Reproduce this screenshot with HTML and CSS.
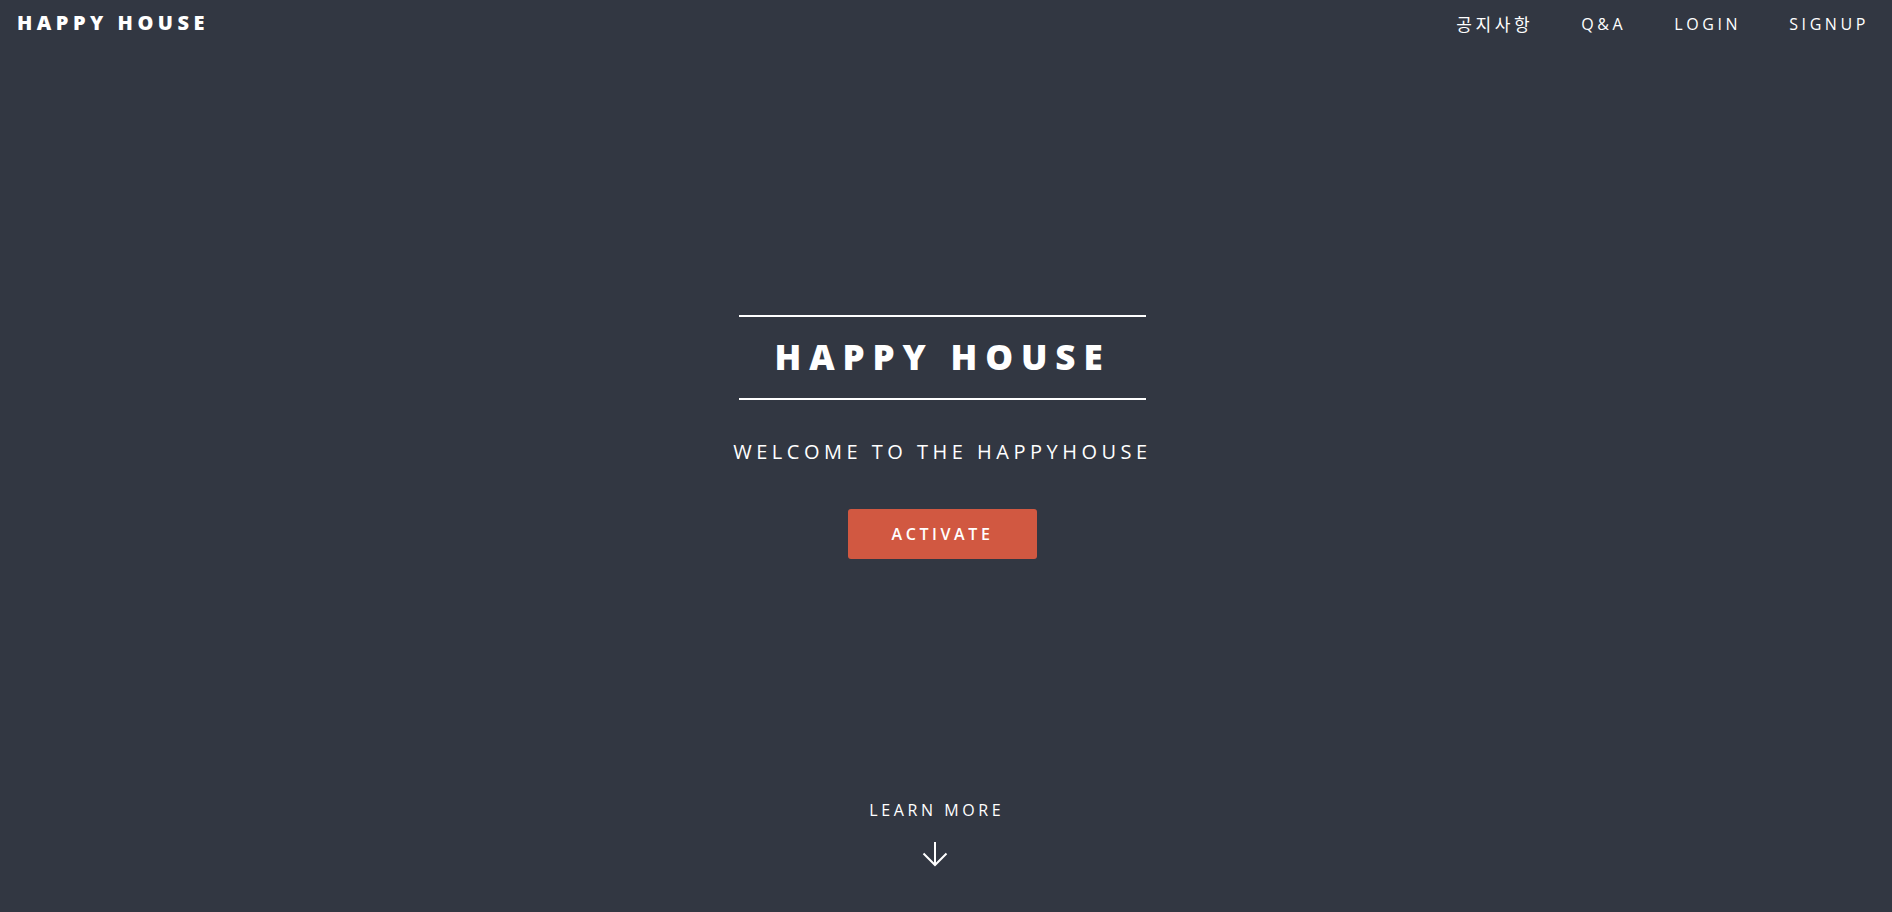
FILE: index.html
```html
<!DOCTYPE html>
<html lang="ko">
<head>
<meta charset="utf-8">
<title>Happy House</title>
<link rel="stylesheet" href="styles.css">
</head>
<body>
<div class="page">
  <header class="header">
    <a class="logo" href="#">Happy House</a>
    <nav class="nav">
      <a class="nav-link nav-ko" href="#">공지사항</a>
      <a class="nav-link" href="#">Q&amp;A</a>
      <a class="nav-link" href="#">Login</a>
      <a class="nav-link" href="#">Signup</a>
    </nav>
  </header>
  <main class="banner">
    <h2 class="banner-title">Happy House</h2>
    <p class="banner-sub">Welcome to the HappyHouse</p>
    <a class="button" href="#">Activate</a>
  </main>
  <a class="more" href="#">
    <span class="more-text">Learn More</span>
    <svg class="more-arrow" width="26" height="26" viewBox="0 0 26 26" aria-hidden="true">
      <line x1="13" y1="1" x2="13" y2="24" stroke="#fff" stroke-width="2"/>
      <polyline points="1.5,12.5 13,24 24.5,12.5" fill="none" stroke="#fff" stroke-width="2"/>
    </svg>
  </a>
</div>
</body>
</html>
```

FILE: styles.css
```css
html, body {
  margin: 0;
  padding: 0;
}

body {
  background: #323742;
  color: #fff;
  font-family: "Open Sans", "Noto Sans CJK KR", sans-serif;
  font-size: 20px;
}

a {
  color: #fff;
  text-decoration: none;
}

.page {
  height: 912px;
  display: flex;
  flex-direction: column;
  overflow: hidden;
}

.header {
  display: flex;
  justify-content: space-between;
  align-items: flex-start;
  height: 48px;
  padding: 0 23px 0 17px;
}

.logo {
  font-size: 20px;
  font-weight: 800;
  letter-spacing: 0.225em;
  text-transform: uppercase;
  line-height: 45px;
}

.nav {
  display: flex;
  gap: 48px;
}

.nav-link {
  font-size: 16px;
  font-weight: 400;
  letter-spacing: 3.6px;
  text-transform: uppercase;
  line-height: 48px;
}

.nav-ko {
  font-family: "Noto Sans CJK KR", "Open Sans", sans-serif;
  font-size: 17px;
}

.banner {
  flex: 1;
  display: flex;
  flex-direction: column;
  align-items: center;
  padding: 267px 7px 0 0;
}

.banner-title {
  margin: 0;
  font-size: 35px;
  font-weight: 800;
  letter-spacing: 0.225em;
  text-transform: uppercase;
  line-height: 56.5px;
  padding: 12.25px 35px;
  border-top: 2px solid #fff;
  border-bottom: 2px solid #fff;
}

.banner-sub {
  margin: 37px 0 0;
  font-size: 20px;
  letter-spacing: 0.225em;
  text-transform: uppercase;
  line-height: 30px;
}

.button {
  margin-top: 42px;
  display: inline-block;
  height: 50px;
  line-height: 50px;
  padding: 0 44px;
  background: #d15841;
  border-radius: 3px;
  font-size: 16px;
  font-weight: 600;
  letter-spacing: 0.225em;
  text-transform: uppercase;
}

.more {
  display: flex;
  flex-direction: column;
  align-items: center;
  padding: 0 22px 45px 0;
}

.more-text {
  font-size: 16px;
  letter-spacing: 0.225em;
  margin-right: -0.225em;
  text-transform: uppercase;
  line-height: 20px;
}

.more-arrow {
  display: block;
  margin-top: 21px;
}
```
